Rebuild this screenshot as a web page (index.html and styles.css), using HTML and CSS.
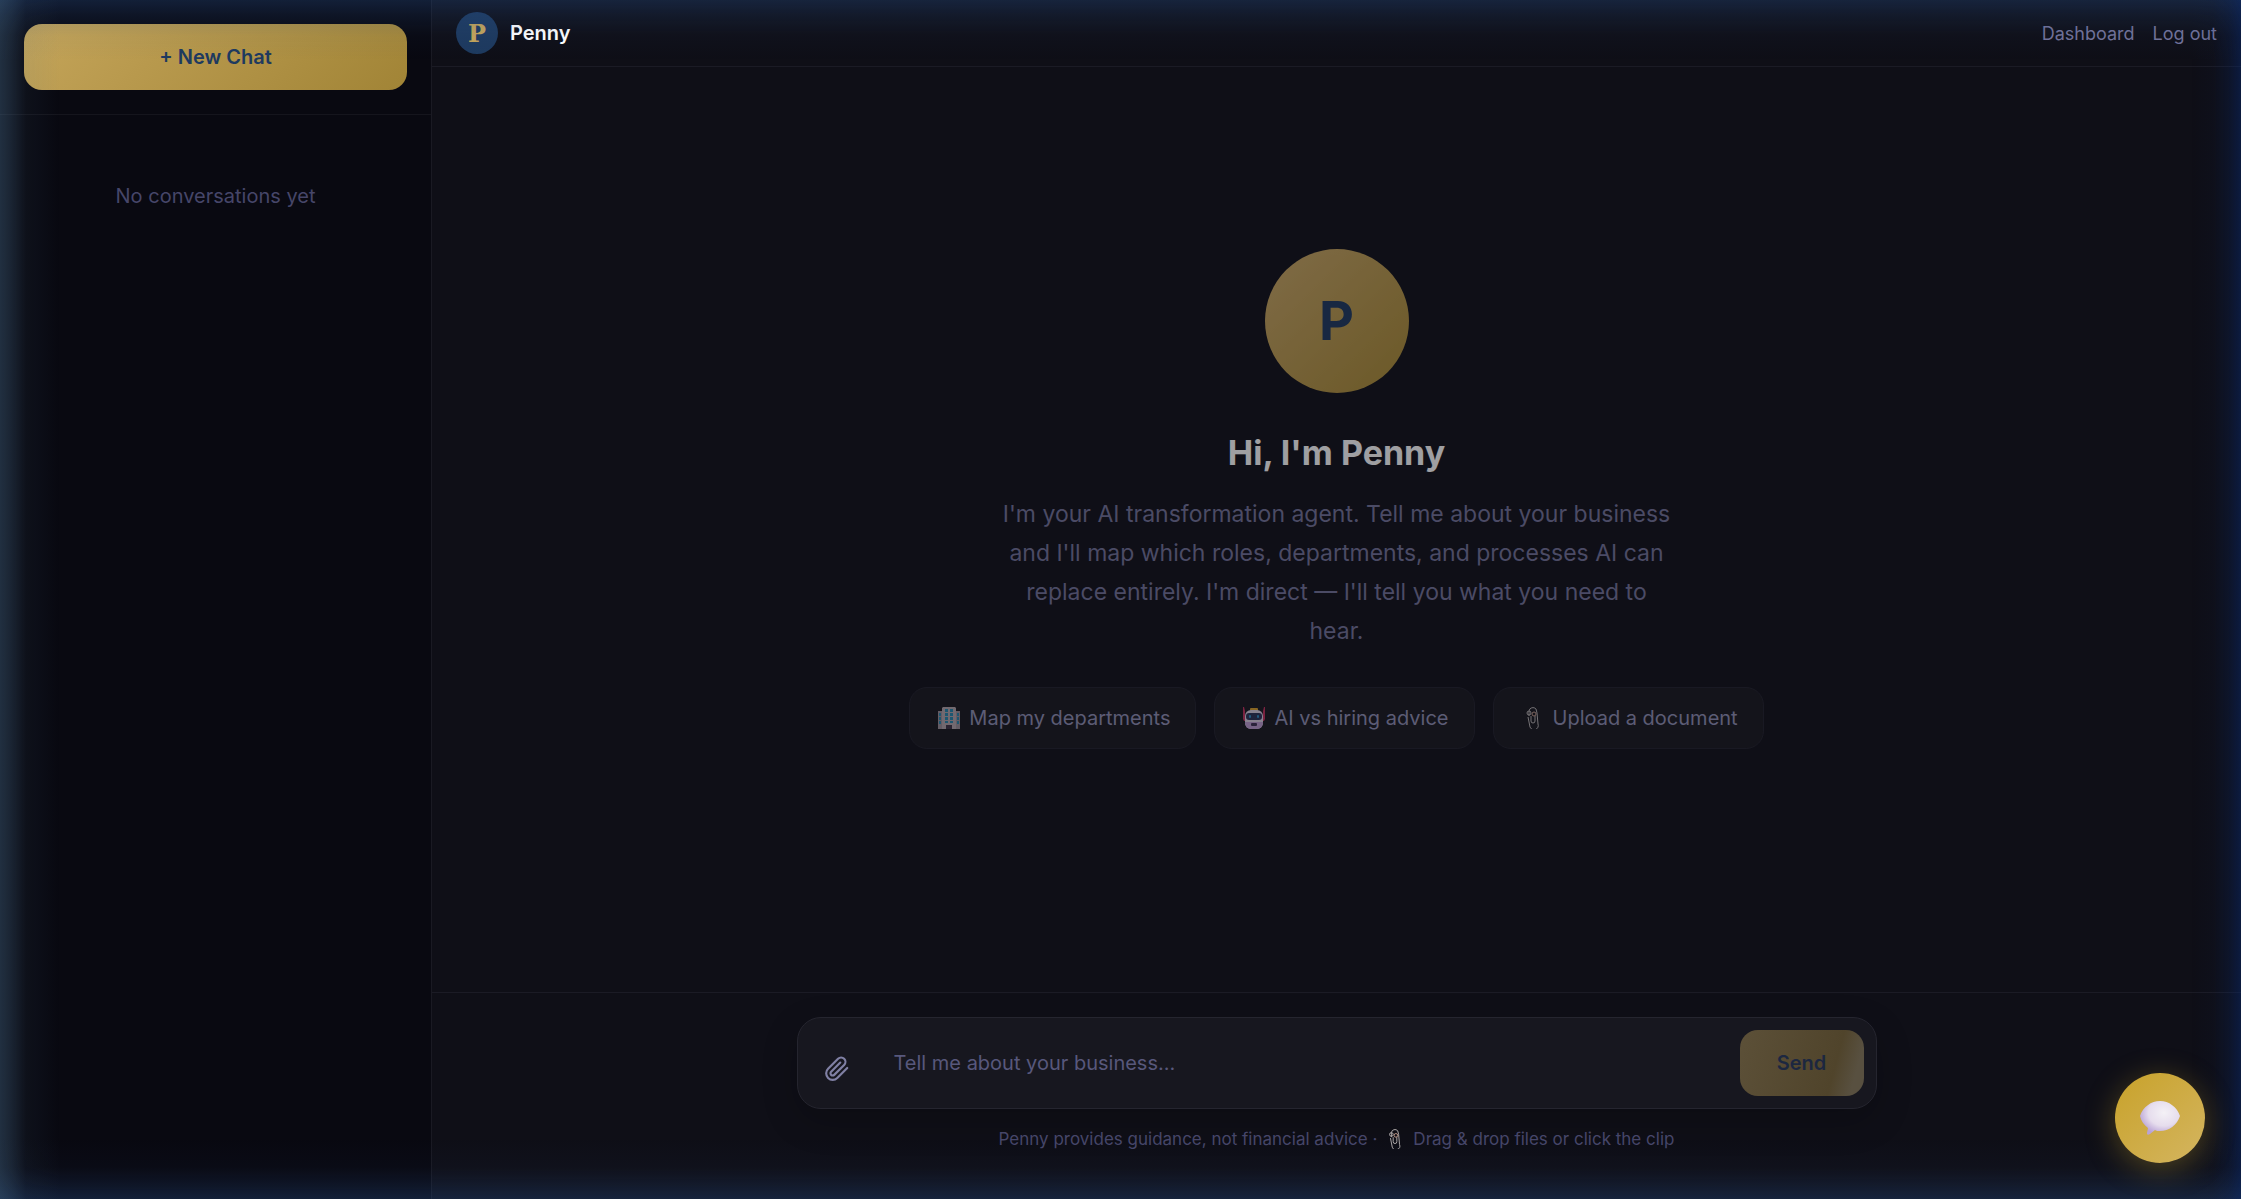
FILE: index.html
```html
<!DOCTYPE html>
<html lang="en">

<head>
  <meta charset="UTF-8">
  <meta name="viewport" content="width=device-width, initial-scale=1.0">
  <title>Penny</title>
  <link rel="stylesheet" href="styles.css">
</head>

<body>
  <div class="app">
    <aside class="sidebar">
      <div class="sidebar-top">
        <button type="button" class="new-chat">+ New Chat</button>
      </div>
      <p class="empty">No conversations yet</p>
    </aside>

    <main class="main">
      <header class="header">
        <div class="brand">
          <span class="brand-logo">P</span>
          <span class="brand-name">Penny</span>
        </div>
        <nav class="nav">
          <a href="#">Dashboard</a>
          <a href="#">Log out</a>
        </nav>
      </header>

      <section class="welcome">
        <div class="avatar">P</div>
        <h1>Hi, I'm Penny</h1>
        <p>I'm your AI transformation agent. Tell me about your business and I'll map which roles, departments, and processes AI can replace entirely. I'm direct — I'll tell you what you need to hear.</p>
        <div class="suggestions">
          <button type="button">
            <svg class="emoji" viewBox="0 0 22 22" aria-hidden="true">
              <path fill="#9c8f99" d="M0 4h5v18H0zM17 4h5v18h-5z" />
              <path fill="#b3a5ac" d="M4 1l1-1h12l1 1v21H4z" />
              <path fill="#2787ae" d="M7 2h3v3H7zM12 2h3v3h-3zM7 6h3v3H7zM12 6h3v3h-3zM7 10h3v3H7zM12 10h3v3h-3zM7 14h3v2H7zM12 14h3v2h-3zM1 6h2v3H1zM1 10h2v3H1zM1 14h2v3H1zM19 6h2v3h-2zM19 10h2v3h-2zM19 14h2v3h-2z" />
              <path fill="#3c3345" d="M8 18h6v4H8z" />
            </svg>
            Map my departments
          </button>
          <button type="button">
            <svg class="emoji" viewBox="0 0 22 22" aria-hidden="true">
              <path fill="#c22f5c" d="M0 0h1l1 4v10H1L0 12zM22 0h-1l-1 4v10h1l1-2z" />
              <rect fill="#d9a02c" x="7" y="1" width="8" height="4" rx="1" />
              <rect fill="#d9cde0" x="2" y="3" width="18" height="19" rx="6" />
              <path fill="#bd9bd0" d="M2 15h18v1a6 6 0 0 1-6 6H8a6 6 0 0 1-6-6z" />
              <rect fill="#2c3357" x="3" y="6" width="16" height="7" rx="3" />
              <rect fill="#2f8cc4" x="6" y="8" width="2" height="3" rx="1" />
              <rect fill="#2f8cc4" x="14" y="8" width="2" height="3" rx="1" />
              <rect fill="#3f3154" x="8" y="16" width="6" height="3" rx="1" />
            </svg>
            AI vs hiring advice
          </button>
          <button type="button">
            <svg class="emoji" viewBox="0 0 22 22" aria-hidden="true">
              <g fill="none" stroke="#b9b4b4" stroke-width="1">
                <path d="M7 9V4a4 4 0 0 1 7-2l1 4 1 11a4 4 0 0 1-8 3L6 10M9 9v5a2 2 0 0 0 4 0V9" />
                <circle cx="7" cy="6" r="2" />
                <circle cx="12" cy="7" r="2" stroke="#c9a090" />
              </g>
            </svg>
            Upload a document
          </button>
        </div>
      </section>

      <footer class="footer">
        <form class="composer">
          <button type="button" class="attach" aria-label="Attach a file">
            <svg viewBox="0 0 24 24" aria-hidden="true">
              <path d="M21.44 11.05l-9.19 9.19a6 6 0 0 1-8.49-8.49l9.19-9.19a4 4 0 0 1 5.66 5.66l-9.2 9.19a2 2 0 0 1-2.83-2.83l8.49-8.48" />
            </svg>
          </button>
          <input type="text" placeholder="Tell me about your business..." aria-label="Message">
          <button type="button" class="send" disabled>Send</button>
        </form>
        <p class="note">Penny provides guidance, not financial advice ·
          <svg class="emoji" viewBox="0 0 22 22" aria-hidden="true">
            <g fill="none" stroke="#b9b4b4" stroke-width="1">
              <path d="M7 9V4a4 4 0 0 1 7-2l1 4 1 11a4 4 0 0 1-8 3L6 10M9 9v5a2 2 0 0 0 4 0V9" />
              <circle cx="7" cy="6" r="2" />
              <circle cx="12" cy="7" r="2" stroke="#c9a090" />
            </g>
          </svg>
          Drag &amp; drop files or click the clip</p>
      </footer>
    </main>
  </div>

  <div class="glow"></div>

  <button type="button" class="chat-bubble" aria-label="Open chat">
    <svg viewBox="0 0 40 34" aria-hidden="true">
      <defs>
        <radialGradient id="bubble" cx="60%" cy="35%" r="65%">
          <stop offset="0" stop-color="#f4f1f6" />
          <stop offset="0.6" stop-color="#e6dded" />
          <stop offset="1" stop-color="#b9a3d6" />
        </radialGradient>
      </defs>
      <path fill="url(#bubble)" d="M0 15C3 6 11 0 20 0s17 6 20 15c-3 9-11 15-20 15-2 0-4 0-5-1l-5 4c-2 1-3 1-3-1l1-5C4 24 1 20 0 15z" />
    </svg>
  </button>
</body>

</html>
```
FILE: styles.css
```css
* {
  box-sizing: border-box;
}

body {
  margin: 0;
  background: #0f0f17;
  color: #fff;
  font-family: Inter, "Liberation Sans", sans-serif;
  font-size: 20px;
}

button,
input {
  font: inherit;
}

h1,
p {
  margin: 0;
}

.app {
  display: flex;
  min-height: 100vh;
}

/* sidebar */
.sidebar {
  width: 432px;
  flex-shrink: 0;
  background: #090911;
  border-right: 1px solid #1a1a23;
}

.sidebar-top {
  padding: 24px;
  border-bottom: 1px solid #15151d;
}

.new-chat {
  width: 100%;
  height: 66px;
  border: none;
  border-radius: 18px;
  background: linear-gradient(135deg, #c5a55a, #a18436);
  color: #1e3a5f;
  font-weight: 600;
}

.empty {
  padding: 67px 24px;
  color: #464669;
  line-height: 28px;
  text-align: center;
}

/* main column */
.main {
  flex: 1;
  display: flex;
  flex-direction: column;
}

.header {
  display: flex;
  align-items: center;
  justify-content: space-between;
  height: 67px;
  padding: 0 24px;
  border-bottom: 1px solid #1b1b25;
}

.brand {
  display: flex;
  align-items: center;
  gap: 12px;
  font-weight: 600;
}

.brand-logo {
  display: flex;
  align-items: center;
  justify-content: center;
  width: 42px;
  height: 42px;
  border-radius: 50%;
  background: #1e3a5f;
  color: #c5a55a;
  font-family: "DejaVu Serif", serif;
  font-size: 24px;
  font-weight: 700;
}

.nav {
  display: flex;
  gap: 18px;
  font-size: 18px;
}

.nav a {
  color: #73739a;
  text-decoration: none;
}

.welcome {
  flex: 1;
  display: flex;
  flex-direction: column;
  align-items: center;
  justify-content: center;
  padding: 0 24px 62px;
  text-align: center;
  opacity: 0.6;
}

.avatar {
  display: flex;
  align-items: center;
  justify-content: center;
  width: 144px;
  height: 144px;
  margin-bottom: 36px;
  border-radius: 50%;
  background: linear-gradient(135deg, #cba967, #a98a32);
  color: #1e3a5f;
  font-size: 54px;
  font-weight: 700;
}

.welcome h1 {
  margin-bottom: 18px;
  font-size: 34px;
  font-weight: 700;
  line-height: 48px;
}

.welcome p {
  max-width: 676px;
  margin-bottom: 36px;
  color: #73739a;
  font-size: 23px;
  line-height: 39px;
}

.suggestions {
  display: flex;
  flex-wrap: wrap;
  justify-content: center;
  gap: 18px;
}

.suggestions button {
  display: flex;
  align-items: center;
  gap: 9px;
  height: 62px;
  padding: 0 25px 0 28px;
  border: 1px solid #21212b;
  border-radius: 18px;
  background: #18181f;
  color: #9090b4;
}

.emoji {
  width: 22px;
  height: 22px;
}

/* message box */
.footer {
  padding: 24px 24px 48px;
  border-top: 1px solid #1b1b25;
}

.composer {
  display: flex;
  align-items: center;
  max-width: 1080px;
  margin: 0 auto;
  padding: 12px;
  border: 1px solid #25252f;
  border-radius: 24px;
  background: #17171f;
  box-shadow: 0 12px 36px rgba(0, 0, 0, 0.2);
}

.attach {
  width: 54px;
  height: 54px;
  padding: 14px;
  margin-top: 12px;
  border: none;
  background: none;
}

.attach svg {
  display: block;
  width: 26px;
  height: 26px;
  fill: none;
  stroke: #8080a4;
  stroke-width: 2;
  stroke-linecap: round;
  stroke-linejoin: round;
}

.composer input {
  flex: 1;
  min-width: 0;
  padding: 0 30px;
  border: none;
  outline: none;
  background: none;
  color: #fff;
}

.composer input::placeholder {
  color: #58587c;
}

.send {
  min-width: 124px;
  height: 66px;
  padding: 0 36px;
  border: none;
  border-radius: 18px;
  background: linear-gradient(105deg, #5c5038, #50442b 74%, #585040 90%);
  color: #1c2740;
  font-weight: 600;
}

.note {
  display: flex;
  align-items: center;
  justify-content: center;
  gap: 8px;
  margin-top: 18px;
  color: #464669;
  font-size: 17px;
  line-height: 24px;
}

.note .emoji {
  width: 20px;
  height: 20px;
}

/* blue light along the window edges */
.glow {
  position: fixed;
  inset: 0;
  pointer-events: none;
  background:
    linear-gradient(to right, rgba(74, 112, 144, 0.38), rgba(74, 112, 144, 0.26) 12px, rgba(74, 112, 144, 0.08) 26px, transparent 60px),
    linear-gradient(to left, rgba(8, 44, 120, 0.42), rgba(8, 44, 120, 0.2) 12px, rgba(8, 44, 120, 0.04) 28px, transparent 50px),
    linear-gradient(to bottom, rgba(40, 80, 140, 0.32), rgba(40, 80, 140, 0.17) 16px, rgba(40, 80, 140, 0.04) 36px, transparent 60px),
    linear-gradient(to top, rgba(40, 80, 140, 0.32), rgba(40, 80, 140, 0.18) 14px, rgba(40, 80, 140, 0.04) 32px, transparent 60px);
}

.chat-bubble {
  position: fixed;
  right: 36px;
  bottom: 36px;
  display: flex;
  align-items: center;
  justify-content: center;
  width: 90px;
  height: 90px;
  padding: 0;
  border: none;
  border-radius: 50%;
  background: linear-gradient(135deg, #c8a22a, #d4b560);
  box-shadow: 0 6px 30px rgba(201, 162, 39, 0.35);
}

.chat-bubble svg {
  width: 40px;
  height: 34px;
}
```
